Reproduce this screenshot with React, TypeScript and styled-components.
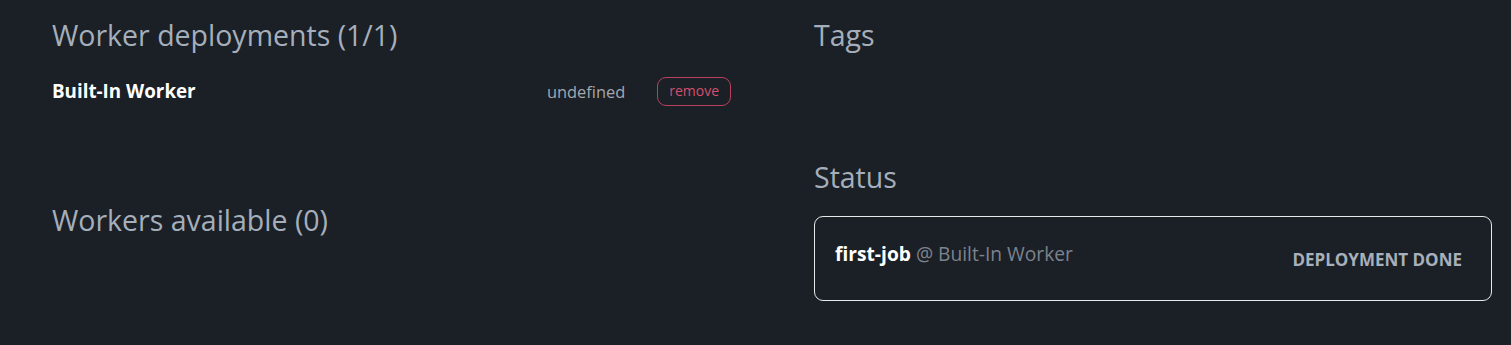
import React from "react";
import styled, { createGlobalStyle } from "styled-components";

const GlobalStyle = createGlobalStyle`
  html, body {
    margin: 0;
    padding: 0;
    background: #1b1f26;
    font-family: "Segoe UI", "Open Sans", "Noto Sans", sans-serif;
  }
`;

const Page = styled.div`
  display: grid;
  grid-template-columns: 678px 678px;
  column-gap: 84px;
  padding: 18px 19px 0 52px;
  min-height: 345px;
  box-sizing: border-box;
  background: #1b1f26;
`;

const Column = styled.section`
  display: flex;
  flex-direction: column;
`;

const Heading = styled.h2<{ $gap?: number }>`
  margin: ${(p) => p.$gap ?? 0}px 0 0;
  font-size: 28.5px;
  line-height: 34px;
  font-weight: 400;
  color: #a5afbc;
`;

const WorkerRow = styled.div`
  display: flex;
  align-items: center;
  margin-top: 24px;
  height: 30px;
`;

const WorkerName = styled.span`
  flex: 1;
  font-size: 18.8px;
  font-weight: 700;
  color: #ffffff;
`;

const WorkerVersion = styled.span`
  font-size: 16.4px;
  color: #a3a8b0;
  margin-right: 32px;
`;

const RemoveButton = styled.button`
  background: transparent;
  border: 1px solid #b9415f;
  color: #d4506f;
  border-radius: 9px;
  font-family: inherit;
  font-size: 14px;
  padding: 3px 11px 5px;
  margin-right: -1px;
  cursor: pointer;
`;

const StatusCard = styled.div`
  margin-top: 22px;
  height: 85px;
  box-sizing: border-box;
  border: 1px solid #e6e8ea;
  border-radius: 9px;
  display: flex;
  align-items: center;
  justify-content: space-between;
  padding: 0 29px 0 20px;
`;

const JobLabel = styled.div`
  font-size: 19.2px;
  color: #7c838d;
  margin-top: -10px;
`;

const JobName = styled.span`
  font-weight: 700;
  color: #ffffff;
`;

const StatusText = styled.span`
  font-size: 17px;
  font-weight: 700;
  color: #a8b0bc;
  text-transform: uppercase;
  margin-top: 1px;
`;

export default function App() {
  return (
    <>
      <GlobalStyle />
      <Page>
        <Column>
          <Heading>Worker deployments (1/1)</Heading>
          <WorkerRow>
            <WorkerName>Built-In Worker</WorkerName>
            <WorkerVersion>undefined</WorkerVersion>
            <RemoveButton>remove</RemoveButton>
          </WorkerRow>
          <Heading $gap={97}>Workers available (0)</Heading>
        </Column>
        <Column>
          <Heading>Tags</Heading>
          <Heading $gap={108}>Status</Heading>
          <StatusCard>
            <JobLabel>
              <JobName>first-job</JobName> @ Built-In Worker
            </JobLabel>
            <StatusText>Deployment done</StatusText>
          </StatusCard>
        </Column>
      </Page>
    </>
  );
}
